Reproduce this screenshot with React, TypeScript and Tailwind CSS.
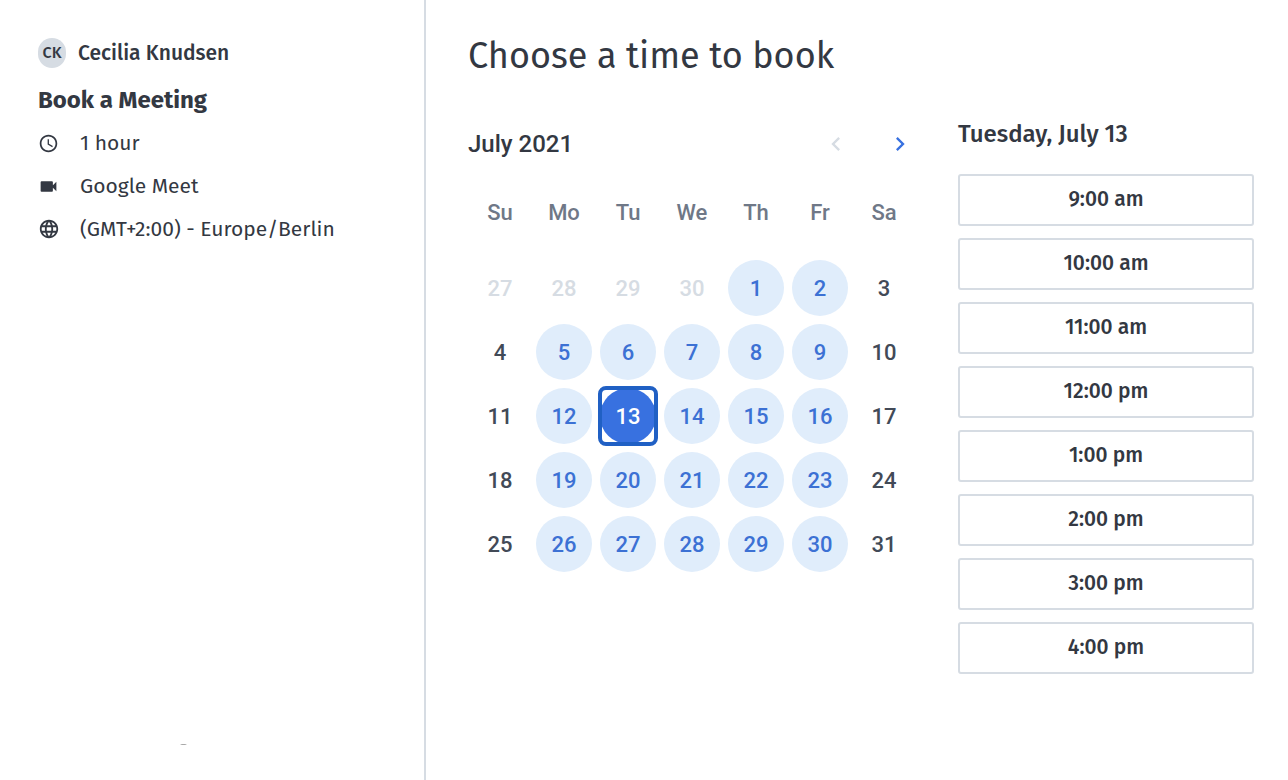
import React, { useState } from 'react';
import { MdAccessTime, MdChevronLeft, MdChevronRight, MdLanguage, MdVideocam } from 'react-icons/md';

interface Day {
    date: number;
    available?: boolean;
    outside?: boolean;
}

const WEEKDAYS = ['Su', 'Mo', 'Tu', 'We', 'Th', 'Fr', 'Sa'];

const TIMES = ['9:00 am', '10:00 am', '11:00 am', '12:00 pm', '1:00 pm', '2:00 pm', '3:00 pm', '4:00 pm'];

// July 2021 starts on a Thursday, so the first row opens with four days of June
const buildWeeks = (): Day[][] => {
    const days: Day[] = [27, 28, 29, 30].map((date) => ({ date, outside: true }));
    for (let date = 1; date <= 31; date++) {
        const weekday = days.length % 7;
        days.push({ date, available: weekday > 0 && weekday < 6 });
    }
    const weeks: Day[][] = [];
    for (let i = 0; i < days.length; i += 7) {
        weeks.push(days.slice(i, i + 7));
    }
    return weeks;
};

const WEEKS = buildWeeks();

const Sidebar: React.FC = () => (
    <aside className="flex w-[426px] shrink-0 flex-col border-r-2 border-[#d6dce3] px-[38px] pt-[37px] pb-[34px]">
        <div className="flex h-8 items-center gap-3">
            <span className="flex h-[30px] w-7 items-center justify-center rounded-full bg-[#d6dce3] text-base font-medium">CK</span>
            <span className="text-[21px] leading-8 font-medium">Cecilia Knudsen</span>
        </div>
        <h2 className="mt-[15px] text-2xl leading-8 font-bold">Book a Meeting</h2>
        <ul className="mt-[11px] space-y-[11px] text-[21px] leading-8">
            <li className="grid grid-cols-[22px_1fr] items-center gap-5">
                <MdAccessTime size={21} />
                1 hour
            </li>
            <li className="grid grid-cols-[22px_1fr] items-center gap-5">
                <MdVideocam size={21} />
                Google Meet
            </li>
            <li className="grid grid-cols-[22px_1fr] items-center gap-5">
                <MdLanguage size={22} />
                (GMT+2:00) - Europe/Berlin
            </li>
        </ul>
        <svg className="mt-auto ml-[142px]" width="7" height="3" viewBox="0 0 7 3" aria-hidden="true">
            <path d="M0 2 Q3.5 0 7 2 Q3.5 1.2 0 2Z" fill="#555" />
        </svg>
    </aside>
);

interface CalendarProps {
    selected: number;
    onSelect: (date: number) => void;
}

const Calendar: React.FC<CalendarProps> = ({ selected, onSelect }) => (
    <section className="font-['Roboto',sans-serif] font-medium">
        <div className="-mr-4 flex h-16 items-center justify-between">
            <h2 className="text-2xl">July 2021</h2>
            <div className="flex">
                <button disabled aria-label="Previous month" className="flex size-16 items-center justify-center text-[#d6dce3]">
                    <MdChevronLeft size={28} />
                </button>
                <button aria-label="Next month" className="flex size-16 items-center justify-center text-[#3871e0]">
                    <MdChevronRight size={28} />
                </button>
            </div>
        </div>
        <table className="mt-1 table-fixed text-center text-[22px]">
            <thead>
                <tr>
                    {WEEKDAYS.map((day) => (
                        <th key={day} scope="col" className="h-[76px] w-16 p-0 pb-3 font-medium text-[#6f7887]">{day}</th>
                    ))}
                </tr>
            </thead>
            <tbody>
                {WEEKS.map((week) => (
                    <tr key={week[0].date}>
                        {week.map((day) => (
                            <td key={day.date} className={`h-16 w-16 p-1 ${day.outside ? 'text-[#d6dce3]' : 'text-[#424a57]'}`}>
                                {day.available ? (
                                    <button
                                        onClick={() => onSelect(day.date)}
                                        className={`block size-14 ${day.date === selected ? 'rounded-md text-white outline-4 -outline-offset-2 outline-[#2060c4]' : 'text-[#3c71d4]'}`}
                                    >
                                        <span className={`flex size-14 items-center justify-center rounded-full ${day.date === selected ? 'bg-[#3871e0]' : 'bg-[#e0edfb]'}`}>
                                            {day.date}
                                        </span>
                                    </button>
                                ) : day.date}
                            </td>
                        ))}
                    </tr>
                ))}
            </tbody>
        </table>
    </section>
);

const App: React.FC = () => {
    const [selected, setSelected] = useState(13);
    const weekday = new Date(2021, 6, selected).toLocaleDateString('en-US', { weekday: 'long' });

    return (
        <div className="flex min-h-screen bg-white font-['Fira_Sans','Noto_Sans',sans-serif] text-[#333842]">
            <Sidebar />
            <main className="flex-1 pt-8 pr-[34px] pl-[42px]">
                <h1 className="text-4xl leading-12">Choose a time to book</h1>
                <div className="mt-8 flex gap-[42px]">
                    <Calendar selected={selected} onSelect={setSelected} />
                    <section className="flex-1 pt-1">
                        <h2 className="text-2xl leading-9 font-medium">{weekday}, July {selected}</h2>
                        <div className="mt-[22px] flex flex-col gap-3">
                            {TIMES.map((time) => (
                                <button key={time} className="h-[52px] rounded-[3px] border-2 border-[#d6dce3] text-[21px] font-medium">
                                    {time}
                                </button>
                            ))}
                        </div>
                    </section>
                </div>
            </main>
        </div>
    );
};

export default App;
